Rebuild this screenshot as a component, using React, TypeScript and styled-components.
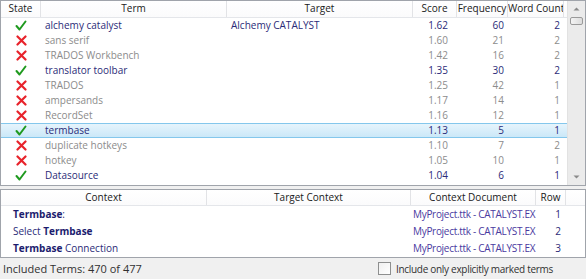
import React from "react";
import styled, { createGlobalStyle } from "styled-components";

type Term = {
  included: boolean;
  term: string;
  target: string;
  score: string;
  frequency: number;
  words: number;
  selected?: boolean;
};

const TERMS: Term[] = [
  { included: true, term: "alchemy catalyst", target: "Alchemy CATALYST", score: "1.62", frequency: 60, words: 2 },
  { included: false, term: "sans serif", target: "", score: "1.60", frequency: 21, words: 2 },
  { included: false, term: "TRADOS Workbench", target: "", score: "1.42", frequency: 16, words: 2 },
  { included: true, term: "translator toolbar", target: "", score: "1.35", frequency: 30, words: 2 },
  { included: false, term: "TRADOS", target: "", score: "1.25", frequency: 42, words: 1 },
  { included: false, term: "ampersands", target: "", score: "1.17", frequency: 14, words: 1 },
  { included: false, term: "RecordSet", target: "", score: "1.16", frequency: 12, words: 1 },
  { included: true, term: "termbase", target: "", score: "1.13", frequency: 5, words: 1, selected: true },
  { included: false, term: "duplicate hotkeys", target: "", score: "1.10", frequency: 7, words: 2 },
  { included: false, term: "hotkey", target: "", score: "1.05", frequency: 10, words: 1 },
  { included: true, term: "Datasource", target: "", score: "1.04", frequency: 6, words: 1 },
];

const CONTEXTS = [
  { before: "", bold: "Termbase", after: ":", row: 1 },
  { before: "Select ", bold: "Termbase", after: "", row: 2 },
  { before: "", bold: "Termbase", after: " Connection", row: 3 },
];

const TOP_COLS = "40px 186px 186px 44px 51px 56px 1fr";
const BOTTOM_COLS = "206px 204px 125px 30px 1fr";

const GlobalStyle = createGlobalStyle`
  html, body {
    margin: 0;
    padding: 0;
    background: #f0f0f0;
  }
  body {
    font-family: "Open Sans", "Noto Sans", sans-serif;
    font-size: 10px;
    color: #1e1e1e;
  }
`;

const Window = styled.div`
  width: 586px;
  height: 279px;
  display: flex;
  flex-direction: column;
  background: #f0f0f0;
  overflow: hidden;
`;

const GridFrame = styled.div<{ $height: number }>`
  height: ${(p) => p.$height}px;
  box-sizing: border-box;
  border: 1px solid #a0a4ab;
  background: #fff;
  display: flex;
  overflow: hidden;
`;

const GridBody = styled.div`
  flex: 1;
  display: flex;
  flex-direction: column;
  min-width: 0;
`;

const HeaderRow = styled.div<{ $cols: string }>`
  display: grid;
  grid-template-columns: ${(p) => p.$cols};
  height: 16px;
  border-bottom: 1px solid #e4e6ea;
  background: linear-gradient(#ffffff, #fbfbfc);
`;

const HeaderCell = styled.div<{ $last?: boolean }>`
  border-right: 1px solid ${(p) => (p.$last ? "transparent" : "#e2e3e6")};
  text-align: center;
  line-height: 15px;
  white-space: nowrap;
  overflow: hidden;
  color: #202020;
`;

const Row = styled.div<{ $cols: string; $height: number; $selected?: boolean }>`
  display: grid;
  grid-template-columns: ${(p) => p.$cols};
  height: ${(p) => p.$height}px;
  box-sizing: border-box;
  line-height: ${(p) => p.$height - 2}px;
  border: 1px solid ${(p) => (p.$selected ? "#84c7ec" : "transparent")};
  background: ${(p) =>
    p.$selected ? "linear-gradient(#e6f4fc, #cbe8f8)" : "transparent"};
  margin: 0 -1px;
`;

const Cell = styled.div<{ $align?: "left" | "right" | "center"; $pad?: number; $muted?: boolean }>`
  text-align: ${(p) => p.$align || "left"};
  padding: ${(p) =>
    p.$align === "right" ? `0 ${p.$pad ?? 4}px 0 0` : `0 0 0 ${p.$pad ?? 4}px`};
  white-space: nowrap;
  overflow: hidden;
  color: ${(p) => (p.$muted ? "#8c8c8c" : "#2b2b78")};
`;

const DocCell = styled(Cell)`
  color: #4a3aa0;
  letter-spacing: -0.3px;
`;

const IconCell = styled.div`
  display: flex;
  align-items: center;
  justify-content: center;
`;

const Scrollbar = styled.div`
  width: 17px;
  background: #ebebeb;
  border-left: 1px solid #e2e2e2;
  display: flex;
  flex-direction: column;
  align-items: center;
`;

const ScrollArrow = styled.div`
  height: 16px;
  width: 17px;
  display: flex;
  align-items: center;
  justify-content: center;
`;

const Thumb = styled.div`
  width: 13px;
  height: 8px;
  box-sizing: border-box;
  border: 1px solid #9a9a9a;
  border-radius: 2px;
  background: linear-gradient(90deg, #f4f4f4, #dcdcdc);
`;

const Gap = styled.div`
  height: 3px;
`;

const Bold = styled.b`
  font-weight: 700;
  color: #1c1c6e;
`;

const StatusBar = styled.div`
  flex: 1;
  display: grid;
  grid-template-columns: 375px 1fr;
  align-items: center;
  padding: 0 3px;
  color: #303030;
  font-size: 11px;
`;

const CheckLabel = styled.label`
  display: flex;
  align-items: center;
  gap: 5px;
  font-size: 10px;
  letter-spacing: -0.3px;
`;

const Box = styled.span`
  width: 11px;
  height: 11px;
  border: 1px solid #8e8f8f;
  background: linear-gradient(135deg, #f0f0f0, #ffffff);
`;

const Spacer = styled.div`
  flex: 1;
`;

const Check = () => (
  <svg width="12" height="11" viewBox="0 0 12 11">
    <path d="M1.5 6 L4.5 9.5 L10.5 1.5" fill="none" stroke="#1f9a1f" strokeWidth="2" strokeLinecap="round" strokeLinejoin="round" />
  </svg>
);

const Cross = () => (
  <svg width="11" height="11" viewBox="0 0 11 11">
    <path d="M1.5 1.5 L9.5 9.5 M9.5 1.5 L1.5 9.5" stroke="#e8222a" strokeWidth="2.2" strokeLinecap="round" />
  </svg>
);

const Arrow = ({ up }: { up?: boolean }) => (
  <svg width="7" height="4" viewBox="0 0 7 4">
    <path d={up ? "M0.5 3.5 L3.5 0.5 L6.5 3.5 Z" : "M0.5 0.5 L3.5 3.5 L6.5 0.5 Z"} fill="#8a8a8a" />
  </svg>
);

export default function App() {
  return (
    <Window>
      <GlobalStyle />
      <GridFrame $height={186}>
        <GridBody>
          <HeaderRow $cols={TOP_COLS}>
            <HeaderCell>State</HeaderCell>
            <HeaderCell>Term</HeaderCell>
            <HeaderCell>Target</HeaderCell>
            <HeaderCell>Score</HeaderCell>
            <HeaderCell>Frequency</HeaderCell>
            <HeaderCell>Word Count</HeaderCell>
            <HeaderCell $last />
          </HeaderRow>
          {TERMS.map((t) => (
            <Row key={t.term} $cols={TOP_COLS} $height={15} $selected={t.selected}>
              <IconCell>{t.included ? <Check /> : <Cross />}</IconCell>
              <Cell $muted={!t.included}>{t.term}</Cell>
              <Cell $muted={!t.included}>{t.target}</Cell>
              <Cell $align="right" $pad={9} $muted={!t.included}>{t.score}</Cell>
              <Cell $align="right" $pad={4} $muted={!t.included}>{t.frequency}</Cell>
              <Cell $align="right" $pad={4} $muted={!t.included}>{t.words}</Cell>
              <div />
            </Row>
          ))}
        </GridBody>
        <Scrollbar>
          <ScrollArrow>
            <Arrow up />
          </ScrollArrow>
          <Thumb />
          <Spacer />
          <ScrollArrow>
            <Arrow />
          </ScrollArrow>
        </Scrollbar>
      </GridFrame>
      <Gap />
      <GridFrame $height={69}>
        <GridBody>
          <HeaderRow $cols={BOTTOM_COLS}>
            <HeaderCell>Context</HeaderCell>
            <HeaderCell>Target Context</HeaderCell>
            <HeaderCell>Context Document</HeaderCell>
            <HeaderCell>Row</HeaderCell>
            <HeaderCell $last />
          </HeaderRow>
          {CONTEXTS.map((c) => (
            <Row key={c.row} $cols={BOTTOM_COLS} $height={17}>
              <Cell $pad={12}>
                {c.before}
                <Bold>{c.bold}</Bold>
                {c.after}
              </Cell>
              <Cell />
              <DocCell $pad={2}>MyProject.ttk - CATALYST.EX</DocCell>
              <Cell $align="right" $pad={5}>{c.row}</Cell>
              <div />
            </Row>
          ))}
        </GridBody>
      </GridFrame>
      <StatusBar>
        <span>Included Terms: 470 of 477</span>
        <CheckLabel>
          <Box />
          Include only explicitly marked terms
        </CheckLabel>
      </StatusBar>
    </Window>
  );
}
